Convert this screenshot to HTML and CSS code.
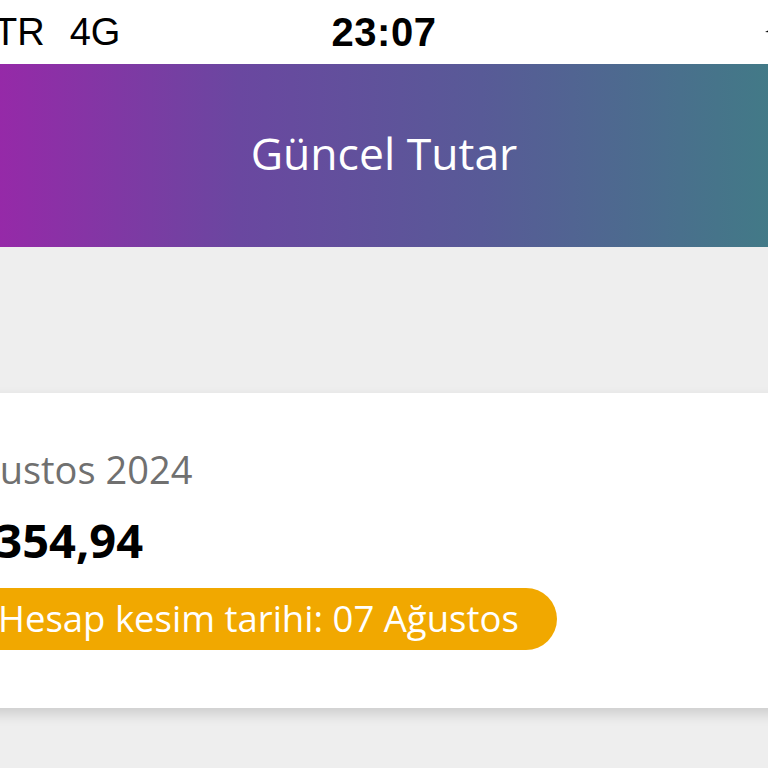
FILE: index.html
```html
<!DOCTYPE html>
<html lang="tr">
<head>
    <meta charset="UTF-8">
    <meta name="viewport" content="width=device-width, initial-scale=1.0">
    <title>Güncel Tutar</title>
    <link rel="stylesheet" href="styles.css">
</head>
<body>
    <div class="screen">
        <div class="status-bar">
            <div class="status-left">
                <span>TR</span>
                <span>4G</span>
            </div>
            <div class="status-time">23:07</div>
            <div class="status-right">
                <svg class="location" width="24" height="24" viewBox="0 0 24 24">
                    <path d="M1 12 L22 2 L13 23 L11 13 Z" fill="#000"/>
                </svg>
            </div>
        </div>

        <header class="header">
            <h1 class="title">Güncel Tutar</h1>
        </header>

        <div class="content">
            <div class="bill-card">
                <div class="bill-month">Ağustos 2024</div>
                <div class="bill-amount">1.354,94</div>
                <div class="bill-date">Hesap kesim tarihi: 07 Ağustos</div>
            </div>
        </div>
    </div>
</body>
</html>
```
FILE: styles.css
```css
body {
    margin: 0;
    overflow: hidden;
    background: #eeeeee;
    font-family: "Open Sans", "Noto Sans", sans-serif;
}

/* the phone screen is wider than the window, both edges are cut off */
.screen {
    width: 968px;
    margin-left: -100px;
}

.status-bar {
    height: 64px;
    background: #ffffff;
    display: grid;
    grid-template-columns: 1fr auto 1fr;
    align-items: center;
    font-family: "Liberation Sans", Arial, sans-serif;
    font-size: 38px;
    color: #000000;
}

.status-left {
    display: flex;
    gap: 25px;
    padding-left: 94px;
}

.status-time {
    font-weight: bold;
    font-size: 40px;
    letter-spacing: 0.5px;
}

.status-right {
    display: flex;
    padding-left: 328px;
}

.location {
    display: block;
}

.header {
    height: 183px;
    display: flex;
    align-items: center;
    justify-content: center;
    background: linear-gradient(to right, #a224ab 0%, #9629a8 10%, #6a47a0 35%, #585a97 60%, #427a87 90%, #3c8088 100%);
}

.title {
    margin: 0 0 6px;
    font-size: 44.5px;
    font-weight: normal;
    line-height: 1.2;
    color: #ffffff;
}

.content {
    padding-top: 146px;
    padding-bottom: 60px;
}

.bill-card {
    margin: 0 16px;
    padding: 52px 36px 58px 39px;
    background: #ffffff;
    box-shadow: 0 6px 12px rgba(0, 0, 0, 0.14);
    display: flex;
    flex-direction: column;
    align-items: flex-start;
}

.bill-month {
    margin-top: 2px;
    font-size: 38px;
    line-height: 1.2;
    color: #707070;
}

.bill-amount {
    margin-top: 19px;
    font-size: 47px;
    font-weight: bold;
    line-height: 1.2;
    color: #000000;
}

.bill-date {
    margin-top: 20px;
    height: 62px;
    display: flex;
    align-items: center;
    padding: 0 38px 0 43px;
    border-radius: 31px;
    background: #f1a800;
    color: #ffffff;
    font-size: 36.5px;
    line-height: 1.2;
}
```
